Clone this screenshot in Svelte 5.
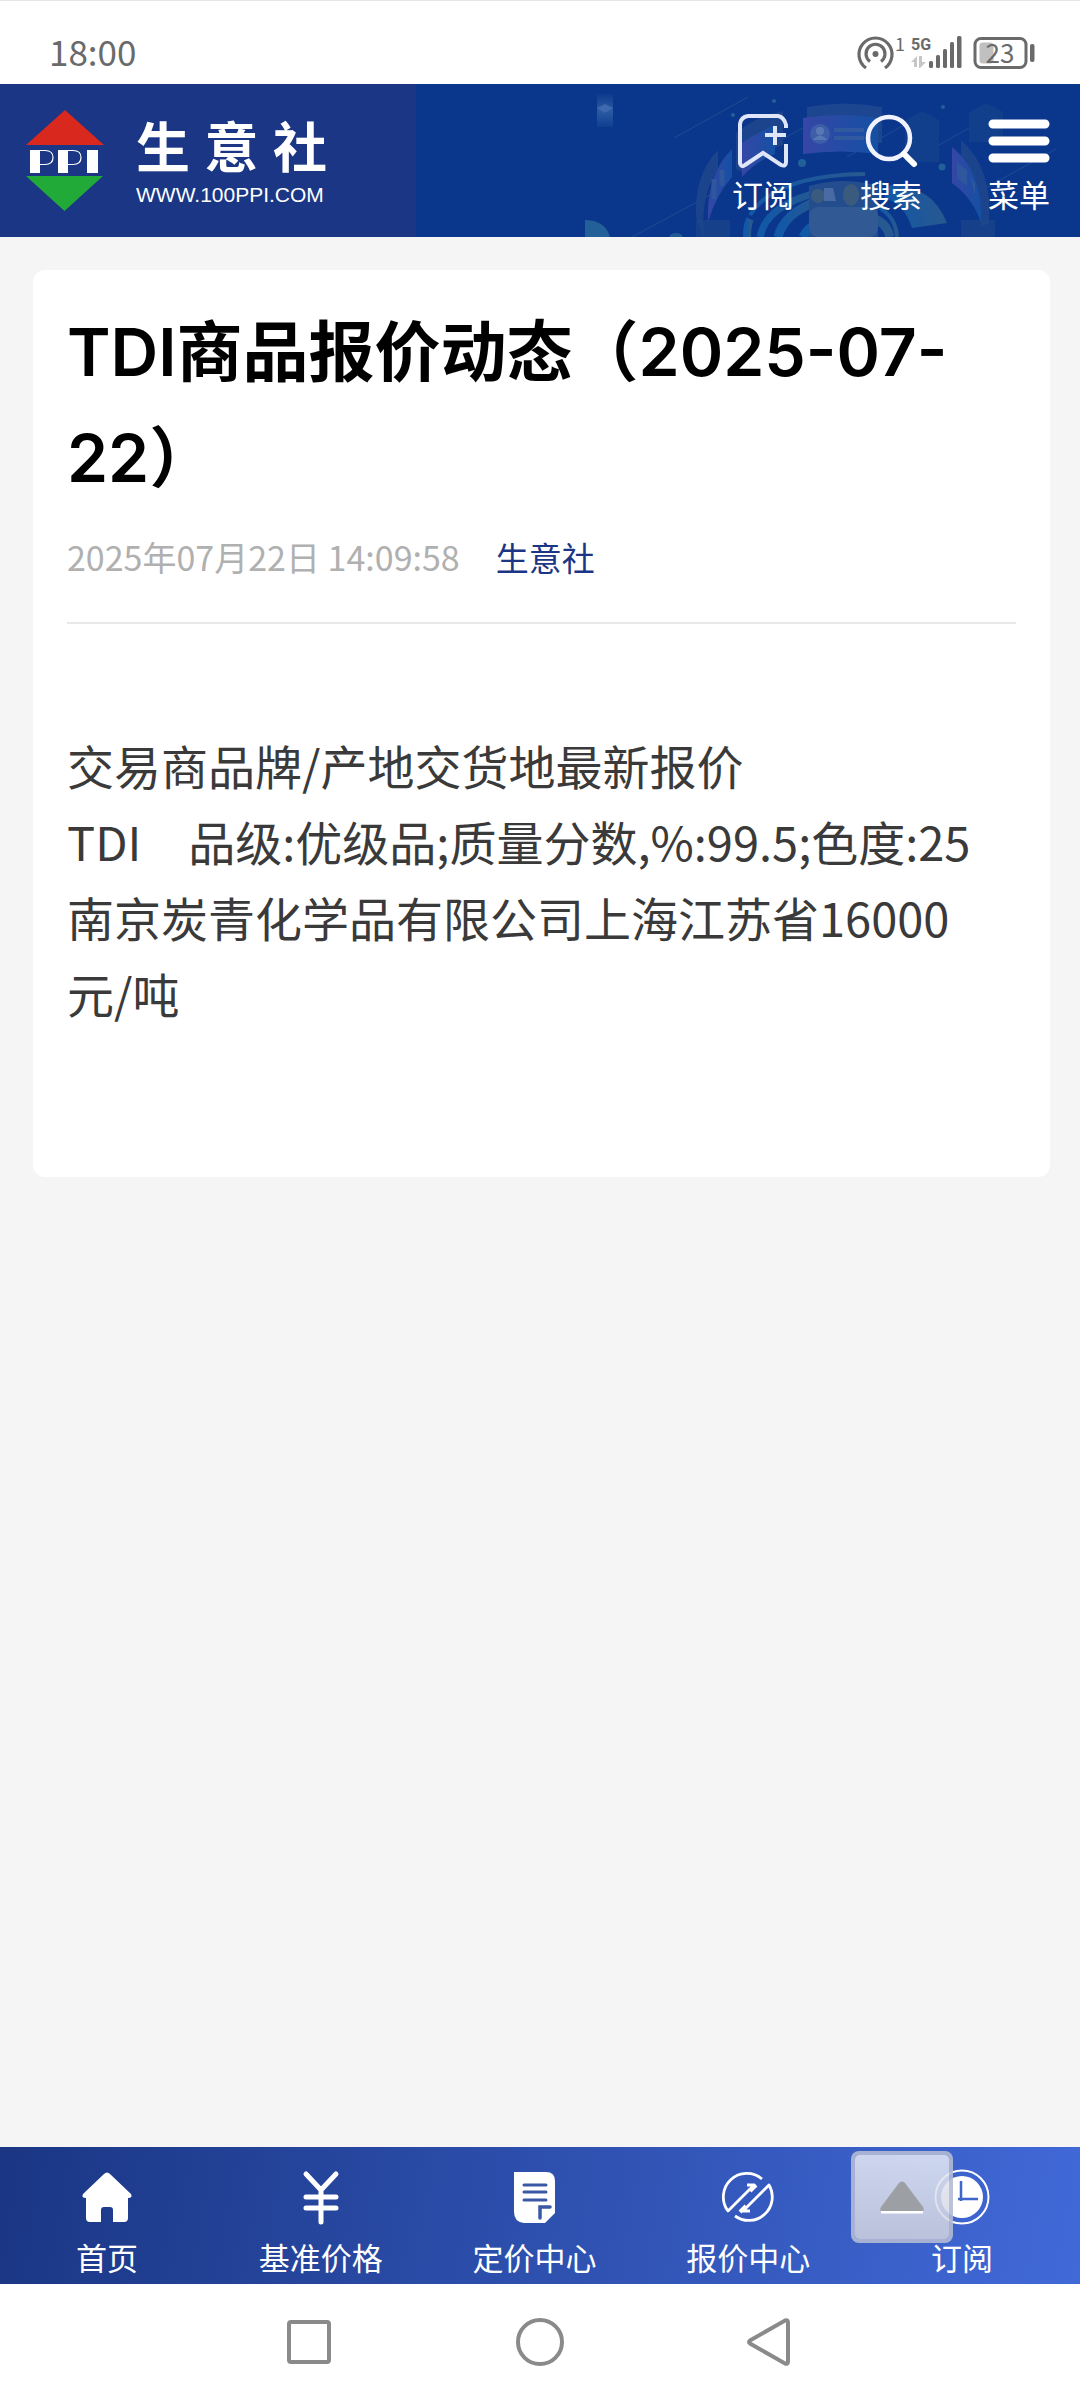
<script>
  const actions = [
    { id: 'mark', label: '订阅' },
    { id: 'search', label: '搜索' },
    { id: 'menu', label: '菜单' }
  ];
  const tabs = [
    { id: 'home', label: '首页' },
    { id: 'yen', label: '基准价格' },
    { id: 'doc', label: '定价中心' },
    { id: 'quote', label: '报价中心' },
    { id: 'clock', label: '订阅' }
  ];
</script>

<div class="screen">
  <div class="status">
    <span class="time">18:00</span>
    <svg class="indicators" width="182" height="56" viewBox="855 23 182 56" aria-label="信号 电量">
      <g fill="none" stroke="#6a6a6a" stroke-linecap="butt">
        <path d="M866 68A16.500 16.500 0 1 1 885 68" stroke-width="3.200" />
        <path d="M870 61.500A9.500 9.500 0 1 1 881 61.500" stroke-width="3.200" />
        <rect x="975" y="38.500" width="51" height="29" rx="6" stroke-width="3" />
      </g>
      <circle cx="875.500" cy="54" r="3" fill="#6a6a6a" />
      <rect x="979.500" y="42.500" width="14" height="21" rx="3" fill="#c0c0c0" />
      <rect x="1030" y="44" width="4.500" height="18" rx="2" fill="#6a6a6a" />
      <g fill="#6a6a6a">
        <rect x="929" y="61" width="4" height="7" rx="1.500" />
        <rect x="936" y="55" width="4" height="13" rx="1.500" />
        <rect x="943" y="49" width="4" height="19" rx="1.500" />
        <rect x="950" y="42" width="4" height="26" rx="1.500" />
        <rect x="957" y="36" width="4.500" height="32" rx="1.500" />
      </g>
      <path d="M911 62l6-6v11h-3v-5zM919 56h3v6h4l-6 6h-1z" fill="#c6c6c6" />
      <text x="895" y="51" class="tiny">1</text>
      <text x="911" y="50" class="tiny strong">5G</text>
      <text x="1000" y="63" class="level" text-anchor="middle">23</text>
    </svg>
  </div>

  <header class="head">
    <svg class="art" width="500" height="153" viewBox="580 84 500 153" aria-hidden="true">
      <defs>
        <linearGradient id="violet" x1="0" x2="1">
          <stop offset="0" stop-color="#3646a6" />
          <stop offset="1" stop-color="#1450a4" />
        </linearGradient>
        <linearGradient id="teal" x1="0" x2="1">
          <stop offset="0" stop-color="#1158a8" />
          <stop offset="1" stop-color="#28588f" />
        </linearGradient>
        <linearGradient id="drop" x1="0" x2="0" y1="0" y2="1">
          <stop offset="0" stop-color="#0e3a8c" />
          <stop offset=".5" stop-color="#2c5ba4" />
          <stop offset="1" stop-color="#0f3e92" />
        </linearGradient>
      </defs>
      <rect x="597" y="94" width="16" height="33" fill="url(#drop)" />
      <path d="M597 108l8-4 8 4-8 5z" fill="#3f68ae" />
      <g stroke="#245494" stroke-width="1" opacity=".8">
        <path d="M674 138l74-41M632 237l78-42M847 157l75-42M930 150l55-31M982 190l74-41M760 152l55-31" />
      </g>
      <path d="M807 107q38-7 75 0v36h-75z" fill="#1c468f" />
      <path d="M803 118q40-6 75 0v36q-36-5-75 0z" fill="url(#violet)" />
      <circle cx="820" cy="134" r="10" fill="#3d5ea8" />
      <circle cx="820" cy="131" r="4" fill="#5878b5" />
      <path d="M813 140q7-9 14 0z" fill="#5878b5" />
      <path d="M834 130h30M834 138h30" stroke="#31599f" stroke-width="4" />
      <path d="M736 133q18-16 47-22v34q-20 5-39 28l-8-4z" fill="#1b448d" />
      <path d="M742 143q14-10 33-18v29q-20 8-33 23z" fill="url(#violet)" />
      <path d="M696 217q-2-42 22-67v20q-18 25-14 67z" fill="#1b448d" />
      <path d="M708 222q-2-47 24-73v28q-16 18-24 45z" fill="url(#violet)" />
      <path d="M714 179v20M722 170v16" stroke="#2e579e" stroke-width="5" />
      <path d="M961 140q32 28 28 84l-8 2q0-30-20-50z" fill="#1b448d" />
      <path d="M952 147q31 25 29 76-8-25-29-40z" fill="url(#violet)" />
      <path d="M957 162l10 8v16l-10-8zM970 177l5 6v12" fill="#2e579e" />
      <g fill="#123f8b">
        <path d="M905 120l17-9 17 9v42h-34zM969 112l17-9 17 9v30h-34z" />
      </g>
      <g fill="none" stroke="url(#teal)">
        <path d="M750 215q25-40 115-41" stroke-width="4" />
        <path d="M747 237q0-12 3-18" stroke-width="8" />
        <path d="M760 237q6-32 60-45" stroke-width="7" />
        <path d="M778 237q6-24 40-36" stroke-width="9" />
        <path d="M803 237q8-18 45-21t42 21" stroke-width="9" />
        <path d="M880 208q16 10 17 29" stroke-width="4" />
      </g>
      <path d="M890 185q42 0 57 38l-35 5q-8-25-28-30z" fill="url(#teal)" />
      <path d="M809 186q34-10 69 0v51h-69z" fill="#234d8c" />
      <rect x="809" y="207" width="69" height="30" rx="9" fill="#315a94" />
      <ellipse cx="851" cy="195" rx="8" ry="11" fill="#3b5b7e" />
      <circle cx="818" cy="196" r="7" fill="#3b5b7e" />
      <path d="M824 188h9l3 13h-12z" fill="#486ba5" />
      <path d="M585 220q20 0 25 17h-25z" fill="#236099" />
      <ellipse cx="676" cy="238" rx="7" ry="5" fill="#205b96" />
      <g fill="#216098">
        <circle cx="802" cy="163" r="4" />
        <circle cx="942" cy="167" r="3.500" />
        <circle cx="774" cy="101" r="2" />
        <circle cx="733" cy="115" r="2" />
        <circle cx="943" cy="107" r="2" />
      </g>
      <path d="M696 220h34v17h-34zM961 220h34v17h-34z" fill="#1e4789" opacity=".6" />
    </svg>

    <a class="brand" href="#home" aria-label="生意社 首页">
      <svg width="78" height="102" viewBox="0 0 78 102" aria-hidden="true">
        <path d="M39 0L78 35H0z" fill="#d9281d" />
        <path d="M0 66h77L38.500 101z" fill="#22aa38" />
        <g fill="#fff">
          <rect x="4" y="40" width="10" height="23" />
          <rect x="32" y="40" width="10" height="23" />
          <rect x="61" y="40" width="11" height="23" />
        </g>
        <g fill="none" stroke="#fff" stroke-width="1.200">
          <path d="M13 40.500h6q8 0 8 7t-8 7h-6M41 40.500h6q8 0 8 7t-8 7h-6" />
        </g>
      </svg>
      <span class="words">
        <span class="name"><b>生</b><b>意</b><b>社</b></span>
        <span class="site">WWW.100PPI.COM</span>
      </span>
    </a>

    <nav class="actions">
      {#each actions as a}
        <button type="button">
          <svg width="64" height="60" viewBox="0 0 64 60" fill="none" stroke="#fff" aria-hidden="true">
            {#if a.id === 'mark'}
              <path d="M55 16v-3q-2-8-8-9H17q-7 1-8 8v39q1 5 5 2l18-12 18 12q5 2 5-3V32M44 14v19M34 23h21" stroke="#dfe6fa" stroke-width="4" />
            {:else if a.id === 'search'}
              <circle cx="30" cy="26" r="21" stroke="#f0f3fd" stroke-width="4.500" />
              <path d="M45 42L55 52" stroke-width="6" stroke-linecap="round" />
            {:else}
              <path d="M6 12h52M6 29h52M6 46h52" stroke-width="9" stroke-linecap="round" />
            {/if}
          </svg>
          <span>{a.label}</span>
        </button>
      {/each}
    </nav>
  </header>

  <main>
    <article>
      <h1>TDI商品报价动态（2025-07-22）</h1>
      <p class="meta"><time>2025年07月22日 14:09:58</time><a href="#source">生意社</a></p>
      <div class="body">
        <p>交易商品牌/产地交货地最新报价</p>
        <p>TDI　品级:优级品;质量分数,%:99.5;色度:25南京炭青化学品有限公司上海江苏省16000<span class="unit">元/吨</span></p>
      </div>
    </article>
  </main>

  <footer>
    <nav class="tabs">
      {#each tabs as t}
        <a href="#{t.id}">
          <svg width="60" height="60" viewBox="0 0 60 60" aria-hidden="true">
            {#if t.id === 'home'}
              <path d="M27 7q3-3 6 0l21 20q2 4-3 4v20q0 4-4 4H36V43q0-3-3-3h-6q-3 0-3 3v12H13q-4 0-4-4V31q-5 0-3-4z" fill="#fff" />
            {:else if t.id === 'yen'}
              <path d="M15 7l15 16L45 7M30 22v33M15 30h30M15 41h30" fill="none" stroke="#fff" stroke-width="5" stroke-linecap="round" stroke-linejoin="round" />
            {:else if t.id === 'doc'}
              <path d="M10 5h32q9 0 9 9v32L41 56H20q-10-1-10-11z" fill="#fff" />
              <path d="M20 18h22M20 25h22M20 33h22" stroke="#3a58a4" stroke-width="3" stroke-linecap="round" />
              <path d="M36 51V40h10" fill="none" stroke="#3a58a4" stroke-width="3.500" stroke-linecap="round" />
            {:else if t.id === 'quote'}
              <g fill="none" stroke="#fff" stroke-width="2.800" stroke-linejoin="round">
                <path d="M44 12A23.500 23.500 0 0 0 10 44L36 18H29M17 49A23.500 23.500 0 0 0 51 18L25 44H32" />
                <path d="M38 18L32 24M22 45L28 39" stroke-width="4" />
              </g>
            {:else}
              <circle cx="30" cy="30" r="26.500" fill="none" stroke="#fff" stroke-width="2" />
              <circle cx="30" cy="30" r="21" fill="#fff" />
              <path d="M29 14v20M26 32h20" stroke="#3f66cc" stroke-width="2.500" />
            {/if}
          </svg>
          <span>{t.label}</span>
        </a>
      {/each}
    </nav>
    <button class="top" type="button" aria-label="返回顶部">
      <svg width="46" height="34" viewBox="0 0 46 34" aria-hidden="true">
        <path d="M2 32h42" stroke="#fff" stroke-width="3" />
        <path d="M20 3q3-3 6 0l18 24q2 4-1 4H3q-3 0-1-4z" fill="#9c9fa3" />
      </svg>
    </button>
  </footer>

  <div class="system">
    <button type="button" aria-label="最近任务"><svg width="50" height="50" viewBox="0 0 50 50"><rect x="5" y="5" width="40" height="40" rx="2" /></svg></button>
    <button type="button" aria-label="主屏幕"><svg width="50" height="50" viewBox="0 0 50 50"><circle cx="25" cy="25" r="22" /></svg></button>
    <button type="button" aria-label="返回"><svg width="50" height="50" viewBox="0 0 50 50"><path d="M4 23.500L39 3.500q3-1 3 2v39q0 3-3 2L4 26.500q-2-1.500 0-3z" /></svg></button>
  </div>
</div>

<style>
  :global(body) {
    background: #fff;
  }
  .screen {
    min-height: 100vh;
    display: flex;
    flex-direction: column;
    font-family: 'Noto Sans CJK SC', sans-serif;
    color: #3a3a3a;
  }
  button {
    border: 0;
    padding: 0;
    background: none;
    font: inherit;
    color: inherit;
  }
  a {
    color: inherit;
    text-decoration: none;
  }
  svg {
    display: block;
  }
  .status {
    box-sizing: border-box;
    height: 84px;
    padding: 16px 43px 0 49px;
    border-top: 1px solid #e5e5e5;
    display: flex;
    align-items: center;
    justify-content: space-between;
  }
  .time {
    font-size: 35px;
    line-height: 36px;
    color: #6a6a6a;
  }
  .tiny {
    font-size: 18px;
    fill: #6a6a6a;
  }
  .strong {
    font-family: Roboto, sans-serif;
    font-weight: 700;
    font-size: 16px;
  }
  .level {
    font-size: 26px;
    fill: #6a6a6a;
  }
  .head {
    position: relative;
    height: 153px;
    display: flex;
    justify-content: space-between;
    background: #0a368b;
    color: #fff;
  }
  .art {
    position: absolute;
    top: 0;
    right: 0;
  }
  .brand {
    box-sizing: border-box;
    width: 416px;
    padding: 0 0 0 26px;
    display: flex;
    align-items: center;
    gap: 32px;
    background: #1a3684;
  }
  .words {
    width: 191px;
    display: flex;
    flex-direction: column;
    gap: 8px;
  }
  .name {
    display: flex;
    justify-content: space-between;
    font-size: 54px;
    line-height: 60px;
  }
  .site {
    font-family: 'Liberation Sans', sans-serif;
    font-size: 21px;
    line-height: 24px;
  }
  .actions {
    position: relative;
    display: flex;
    gap: 64px;
    padding: 28px 29px 0 0;
  }
  .actions button {
    width: 64px;
    display: flex;
    flex-direction: column;
    align-items: center;
    justify-content: flex-start;
    gap: 2px;
    font-size: 31px;
    line-height: 40px;
    white-space: nowrap;
  }
  main {
    flex: 1;
    padding: 33px 30px 33px 33px;
    background: #f5f5f5;
  }
  article {
    padding: 29px 34px 146px;
    border-radius: 12px;
    background: #fff;
  }
  h1 {
    margin: 0;
    font-family: Inter, 'Noto Sans CJK SC', sans-serif;
    font-size: 66px;
    line-height: 106px;
    font-weight: 600;
    color: #000;
  }
  .meta {
    margin: 0;
    padding: 20px 0 39px;
    border-bottom: 2px solid #e8e8e8;
    display: flex;
    gap: 36px;
    font-size: 33px;
    line-height: 52px;
    color: #b0b0b0;
  }
  .meta time {
    font-size: 34px;
  }
  .meta a {
    color: #1a3684;
  }
  .body {
    padding-top: 103px;
    font-size: 47px;
    line-height: 76px;
  }
  .body p {
    margin: 0;
  }
  .unit {
    display: inline-block;
  }
  footer {
    position: relative;
    background: linear-gradient(100deg, #1a3684, #4169d8);
    color: #fff;
  }
  .tabs {
    height: 137px;
    padding-right: 11px;
    display: grid;
    grid-template-columns: repeat(5, 1fr);
  }
  .tabs a {
    padding-top: 20px;
    display: flex;
    flex-direction: column;
    align-items: center;
    gap: 10px;
    font-size: 31px;
    line-height: 40px;
  }
  .top {
    position: absolute;
    top: 4px;
    right: 127px;
    width: 102px;
    height: 92px;
    border: 4px solid rgba(178, 186, 212, 0.9);
    border-radius: 8px;
    display: grid;
    place-items: center;
    background: linear-gradient(rgba(230, 234, 245, 0.86), rgba(208, 210, 222, 0.86)) padding-box;
  }
  .system {
    height: 116px;
    display: flex;
    align-items: center;
    justify-content: center;
    gap: 181px;
    background: #fff;
  }
  .system svg {
    fill: none;
    stroke: #8a8a8a;
    stroke-width: 4;
  }
</style>
